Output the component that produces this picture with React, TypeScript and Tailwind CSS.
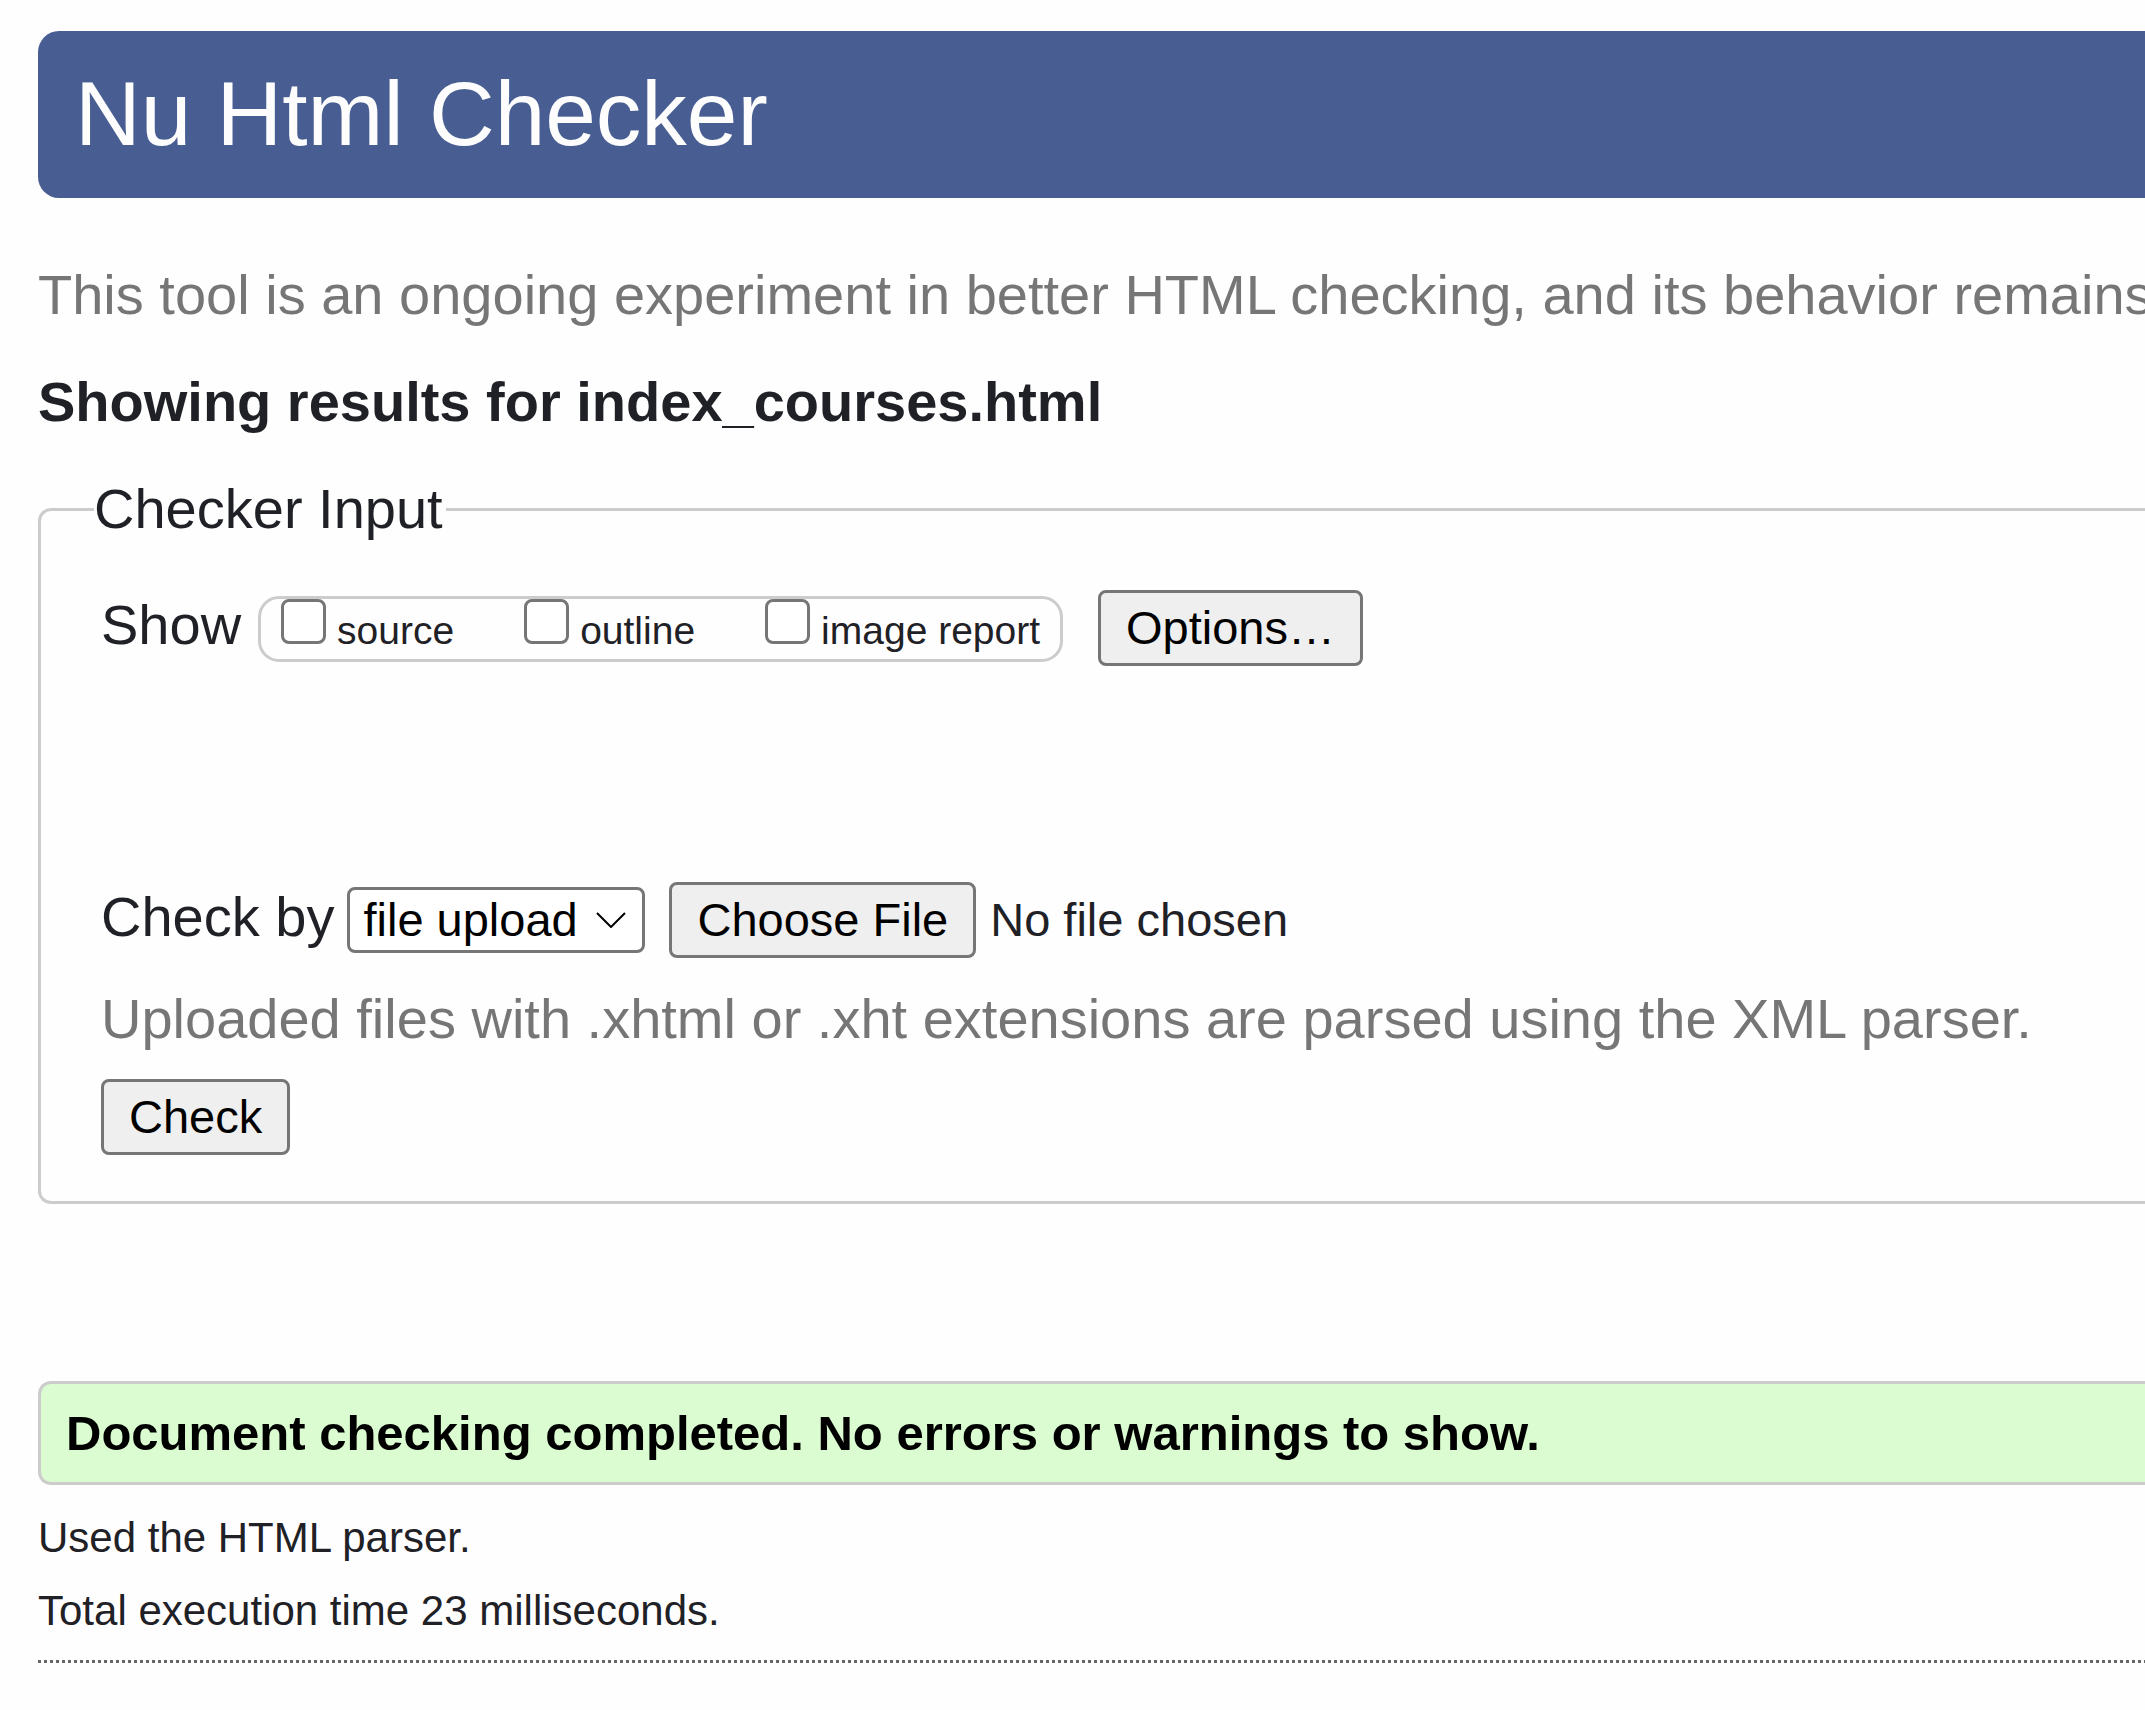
import React from "react";

const buttonClass =
  "rounded-[8px] border-[3px] border-[#767676] bg-[#efefef] px-[25px] py-2 text-[47px] leading-[54px] text-black";

const reports = [
  { id: "source", label: "source" },
  { id: "outline", label: "outline" },
  { id: "image-report", label: "image report" },
];

function ReportOption({ id, label }: { id: string; label: string }) {
  return (
    <span className="flex items-baseline gap-[11px]">
      <input
        id={id}
        type="checkbox"
        className="size-[45px] appearance-none rounded-[8px] border-[3px] border-[#767676] bg-white checked:bg-[#0075ff]"
      />
      <label htmlFor={id}>{label}</label>
    </span>
  );
}

function MethodSelect() {
  return (
    <span className="grid">
      <select
        id="method"
        defaultValue="file"
        className="col-start-1 row-start-1 appearance-none rounded-[8px] border-[3px] border-[#767676] bg-white py-[3px] pr-[64px] pl-[13px] text-[47px] leading-[54px] text-black"
      >
        <option value="file">file upload</option>
        <option value="address">address</option>
        <option value="text">text input</option>
      </select>
      <svg
        viewBox="0 0 30 16"
        className="pointer-events-none col-start-1 row-start-1 mr-[19px] h-4 w-[30px] self-center justify-self-end"
        fill="none"
        stroke="#000"
        strokeWidth="2"
        aria-hidden="true"
      >
        <path d="M1 1 15 15 29 1" />
      </svg>
    </span>
  );
}

export default function App() {
  return (
    <div className="min-h-screen overflow-hidden bg-[#fefefe] pt-[31px] pl-[38px] font-['Liberation_Sans',Arial,sans-serif] text-[56px] leading-[64px] text-[#1f2126]">
      <header className="rounded-l-[21px] bg-[#485e92] pt-[30px] pb-8 pl-[37px]">
        <h1 className="text-[91px] leading-[105px] text-[#fdfdfd]">Nu Html Checker</h1>
      </header>

      <main>
        <p className="mt-[65px] whitespace-nowrap text-[#767676]">
          This tool is an ongoing experiment in better HTML checking, and its behavior remains
        </p>
        <h2 className="mt-[43px] font-bold">Showing results for index_courses.html</h2>

        <form className="mt-[43px]" onSubmit={(e) => e.preventDefault()}>
          <fieldset className="rounded-l-[13px] border-[3px] border-r-0 border-[#ccc] pr-0 pb-[46px] pl-[53px]">
            <legend className="pr-[3px]">Checker Input</legend>
            <div className="pl-[7px]">
              <div className="flex items-baseline pt-[49px]">
                <span>Show</span>
                <div className="ml-[17px] flex items-baseline gap-[70px] rounded-[21px] border-[3px] border-[#ccc] px-5 text-[39px] leading-[56px]">
                  {reports.map((r) => (
                    <ReportOption key={r.id} id={r.id} label={r.label} />
                  ))}
                </div>
                <button type="button" className={`ml-[35px] ${buttonClass}`}>
                  Options…
                </button>
              </div>

              <div className="mt-[216px] flex items-baseline">
                <label htmlFor="method" className="mr-[13px]">
                  Check by
                </label>
                <MethodSelect />
                <input
                  type="file"
                  aria-label="File to check"
                  className="ml-6 w-[700px] text-[47px] leading-[54px] file:mr-[14px] file:rounded-[8px] file:border-[3px] file:border-solid file:border-[#767676] file:bg-[#efefef] file:px-[25px] file:py-2 file:text-[47px] file:leading-[54px] file:text-black"
                />
              </div>

              <p className="mt-[29px] whitespace-nowrap text-[#767676]">
                Uploaded files with .xhtml or .xht extensions are parsed using the XML parser.
              </p>
              <button type="submit" className={`mt-7 block ${buttonClass}`}>
                Check
              </button>
            </div>
          </fieldset>
        </form>

        <section className="mt-[177px]">
          <p className="rounded-l-[13px] border-[3px] border-r-0 border-[#ccc] bg-[#dafcd0] py-[21px] pl-[25px] text-[49px] leading-[56px] font-bold text-black">
            Document checking completed. No errors or warnings to show.
          </p>
          <div className="text-[42px] leading-[48px]">
            <p className="mt-[29px]">Used the HTML parser.</p>
            <p className="mt-[25px]">Total execution time 23 milliseconds.</p>
          </div>
        </section>
        <hr className="mt-[25px] h-[3px] border-0 bg-[repeating-linear-gradient(90deg,#666_0px,#666_3px,transparent_3px,transparent_6px)]" />
      </main>
    </div>
  );
}
